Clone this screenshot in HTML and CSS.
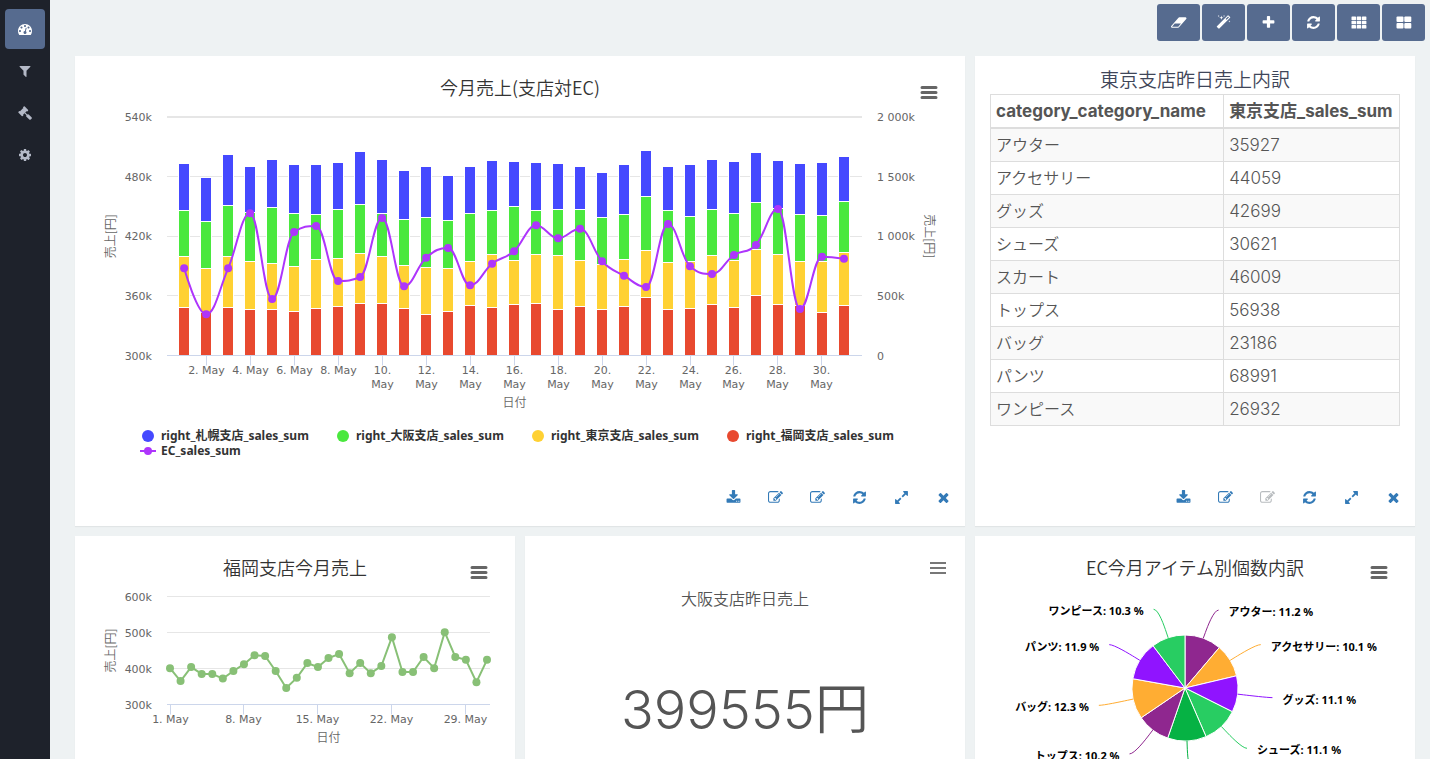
FILE: index.html
```html
<!DOCTYPE html>
<html lang="ja">
  <head>
    <meta charset="UTF-8" />
    <meta name="viewport" content="width=device-width, initial-scale=1.0" />
    <title>売上ダッシュボード</title>
    <link rel="stylesheet" href="styles.css" />
  </head>
  <body>
    <!-- Icon sprite -->
    <svg class="sprite" aria-hidden="true">
      <symbol id="i-dashboard" viewBox="0 0 1792 1792">
        <path d="M384 1152q0-53-37.5-90.5t-90.5-37.5-90.5 37.5-37.5 90.5 37.5 90.5 90.5 37.5 90.5-37.5 37.5-90.5zm192-448q0-53-37.5-90.5t-90.5-37.5-90.5 37.5-37.5 90.5 37.5 90.5 90.5 37.5 90.5-37.5 37.5-90.5zm428 481l101-382q6-26-7.500-48.500t-38.500-29.500-48 6.500-30 39.500l-101 382q-60 5-107 43.500t-63 98.500q-20 77 20 146t117 89 146-20 89-117q16-60-6-117t-72-91zm660-33q0-53-37.500-90.500t-90.500-37.500-90.500 37.500-37.500 90.500 37.500 90.500 90.500 37.500 90.500-37.500 37.500-90.500zm-640-640q0-53-37.500-90.500t-90.500-37.500-90.500 37.500-37.500 90.500 37.500 90.500 90.500 37.500 90.500-37.500 37.500-90.500zm448 192q0-53-37.500-90.500t-90.500-37.500-90.500 37.500-37.500 90.500 37.500 90.500 90.500 37.500 90.500-37.500 37.500-90.500zm320 448q0 261-141 483-19 29-54 29h-1402q-35 0-54-29-141-221-141-483 0-182 71-348t191-286 286-191 348-71 348 71 286 191 191 286 71 348z" />
      </symbol>
      <symbol id="i-filter" viewBox="0 0 1792 1792">
        <path d="M1595 295q17 41-14 70l-493 493v742q0 42-39 59-13 5-25 5-27 0-45-19l-256-256q-19-19-19-45v-486l-493-493q-31-29-14-70 17-39 59-39h1280q42 0 59 39z" />
      </symbol>
      <symbol id="i-gavel" viewBox="0 0 1792 1792">
        <path d="M1771 1536q0 53-37 90l-107 108q-39 37-91 37-53 0-90-37l-363-364q-38-36-38-90 0-53 43-96l-256-256-126 126q-14 14-34 14t-34-14q2 2 12.5 12t12.5 13 10 11.5 10 13.5 6 13.5 5.5 16.5 1.5 18q0 38-28 68-3 3-16.5 18t-19 20.5-18.5 16.5-22 15.5-22 9-26 4.5q-40 0-68-28l-408-408q-28-28-28-68 0-13 4.5-26t9-22 15.5-22 16.5-18.5 20.5-19 18-16.5q30-28 68-28 10 0 18 1.5t16.5 5.5 13.5 6 13.5 10 11.5 10 13 12.5 12 12.5q-14-14-14-34t14-34l348-348q14-14 34-14t34 14q-2-2-12.5-12t-12.5-13-10-11.5-10-13.5-6-13.5-5.5-16.5-1.5-18q0-38 28-68 3-3 16.5-18t19-20.5 18.5-16.5 22-15.5 22-9 26-4.5q40 0 68 28l408 408q28 28 28 68 0 13-4.5 26t-9 22-15.5 22-16.5 18.5-20.5 19-18 16.5q-30 28-68 28-10 0-18-1.5t-16.5-5.5-13.5-6-13.5-10-11.5-10-13-12.5-12-12.5q14 14 14 34t-14 34l-126 126 256 256q43-43 96-43 52 0 91 37l363 363q37 39 37 91z" />
      </symbol>
      <symbol id="i-cog" viewBox="0 0 1792 1792">
        <path d="M1152 896q0-106-75-181t-181-75-181 75-75 181 75 181 181 75 181-75 75-181zm512-109v222q0 12-8 23t-20 13l-185 28q-19 54-39 91 35 50 107 138 10 12 10 25t-9 23q-27 37-99 108t-94 71q-12 0-26-9l-138-108q-44 23-91 38-16 136-29 186-7 28-36 28h-222q-14 0-24.5-8.5t-11.5-21.5l-28-184q-49-16-90-37l-141 107q-10 9-25 9-14 0-25-11-126-114-165-168-7-10-7-23 0-12 8-23 15-21 51-66.5t54-70.5q-27-50-41-99l-183-27q-13-2-21-12.5t-8-23.5v-222q0-12 8-23t19-13l186-28q14-46 39-92-40-57-107-138-10-12-10-24 0-10 9-23 26-36 98.5-107.5t94.5-71.5q13 0 26 10l138 107q44-23 91-38 16-136 29-186 7-28 36-28h222q14 0 24.5 8.5t11.5 21.5l28 184q49 16 90 37l142-107q9-9 24-9 13 0 25 10 129 119 165 170 7 8 7 22 0 12-8 23-15 21-51 66.5t-54 70.5q26 50 41 98l183 28q13 2 21 12.5t8 23.5z" />
      </symbol>
      <symbol id="i-eraser" viewBox="-64 0 1984 1792">
        <path d="M832 1408l336-384h-768l-336 384h768zm1013-1077q15 34 9.5 71.5t-30.500 65.500l-896 1024q-38 44-96 44h-768q-38 0-69.500-20.500t-47.500-54.500q-15-34-9.500-71.500t30.500-65.500l896-1024q38-44 96-44h768q38 0 69.500 20.500t47.500 54.500z" />
      </symbol>
      <symbol id="i-magic" viewBox="0 0 1792 1792">
        <path d="M1254 581l293-293-107-107-293 293zm447-293q0 27-18 45l-1286 1286q-18 18-45 18t-45-18l-198-198q-18-18-18-45t18-45l1286-1286q18-18 45-18t45 18l198 198q18 18 18 45zm-1351-190l98 30-98 30-30 98-30-98-98-30 98-30 30-98zm350 162l196 60-196 60-60 196-60-196-196-60 196-60 60-196zm930 478l98 30-98 30-30 98-30-98-98-30 98-30 30-98zm-640-640l98 30-98 30-30 98-30-98-98-30 98-30 30-98z" />
      </symbol>
      <symbol id="i-plus" viewBox="0 0 1792 1792">
        <path d="M1600 736v192q0 40-28 68t-68 28h-416v416q0 40-28 68t-68 28h-192q-40 0-68-28t-28-68v-416h-416q-40 0-68-28t-28-68v-192q0-40 28-68t68-28h416v-416q0-40 28-68t68-28h192q40 0 68 28t28 68v416h416q40 0 68 28t28 68z" />
      </symbol>
      <symbol id="i-refresh" viewBox="0 0 1792 1792">
        <path d="M1639 1056q0 5-1 7-64 268-268 434.500t-478 166.500q-146 0-282.500-55t-243.500-157l-129 129q-19 19-45 19t-45-19-19-45v-448q0-26 19-45t45-19h448q26 0 45 19t19 45-19 45l-137 137q71 66 161 102t187 36q134 0 250-65t186-179q11-17 53-117 8-23 30-23h192q13 0 22.500 9.500t9.500 22.500zm25-800v448q0 26-19 45t-45 19h-448q-26 0-45-19t-19-45 19-45l138-138q-148-137-349-137-134 0-250 65t-186 179q-11 17-53 117-8 23-30 23h-199q-13 0-22.500-9.500t-9.500-22.500v-7q65-268 270-434.500t480-166.500q146 0 284 55.500t245 156.500l130-129q19-19 45-19t45 19 19 45z" />
      </symbol>
      <symbol id="i-th" viewBox="0 0 16 15">
        <rect x="0.5" y="1.5" width="4.500" height="3.500" rx="0.6" />
        <rect x="5.700" y="1.5" width="4.500" height="3.500" rx="0.6" />
        <rect x="10.900" y="1.5" width="4.500" height="3.500" rx="0.6" />
        <rect x="0.5" y="5.800" width="4.500" height="3.500" rx="0.6" />
        <rect x="5.700" y="5.800" width="4.500" height="3.500" rx="0.6" />
        <rect x="10.900" y="5.800" width="4.500" height="3.500" rx="0.6" />
        <rect x="0.5" y="10.100" width="4.500" height="3.500" rx="0.6" />
        <rect x="5.700" y="10.100" width="4.500" height="3.500" rx="0.6" />
        <rect x="10.900" y="10.100" width="4.500" height="3.500" rx="0.6" />
      </symbol>
      <symbol id="i-th-large" viewBox="0 0 16 15">
        <rect x="0.5" y="1.5" width="7" height="5.600" rx="1" />
        <rect x="8.300" y="1.5" width="7" height="5.600" rx="1" />
        <rect x="0.5" y="8" width="7" height="5.600" rx="1" />
        <rect x="8.300" y="8" width="7" height="5.600" rx="1" />
      </symbol>
      <symbol id="i-download" viewBox="0 0 1792 1792">
        <path d="M1344 1344q0-26-19-45t-45-19-45 19-19 45 19 45 45 19 45-19 19-45zm256 0q0-26-19-45t-45-19-45 19-19 45 19 45 45 19 45-19 19-45zm128-224v320q0 40-28 68t-68 28h-1472q-40 0-68-28t-28-68v-320q0-40 28-68t68-28h465l135 136q58 56 136 56t136-56l136-136h464q40 0 68 28t28 68zm-325-569q17 41-14 70l-448 448q-18 19-45 19t-45-19l-448-448q-31-29-14-70 17-39 59-39h256v-448q0-26 19-45t45-19h256q26 0 45 19t19 45v448h256q42 0 59 39z" />
      </symbol>
      <symbol id="i-edit" viewBox="0 0 1792 1792">
        <path d="M888 1184l116-116-152-152-116 116v56h96v96h56zm440-720q-16-16-33 1l-350 350q-17 17-1 33t33-1l350-350q17-17 1-33zm80 594v190q0 119-84.500 203.500t-203.500 84.500h-832q-119 0-203.500-84.500t-84.500-203.500v-832q0-119 84.500-203.500t203.500-84.500h832q63 0 117 25 15 7 18 23 3 17-9 29l-49 49q-14 14-32 8-23-6-45-6h-832q-66 0-113 47t-47 113v832q0 66 47 113t113 47h832q66 0 113-47t47-113v-126q0-13 9-22l64-64q15-15 35-7t20 29zm-96-738l288 288-672 672h-288v-288zm444 132l-92 92-288-288 92-92q28-28 68-28t68 28l152 152q28 28 28 68t-28 68z" />
      </symbol>
      <symbol id="i-expand" viewBox="0 0 1792 1792">
        <path d="M883 1056q0 13-10 23l-332 332 144 144q19 19 19 45t-19 45-45 19h-448q-26 0-45-19t-19-45v-448q0-26 19-45t45-19 45 19l144 144 332-332q10-10 23-10t23 10l114 114q10 10 10 23zm781-864v448q0 26-19 45t-45 19-45-19l-144-144-332 332q-10 10-23 10t-23-10l-114-114q-10-10-10-23t10-23l332-332-144-144q-19-19-19-45t19-45 45-19h448q26 0 45 19t19 45z" />
      </symbol>
      <symbol id="i-times" viewBox="0 0 1792 1792">
        <path d="M1490 1322q0 40-28 68l-136 136q-28 28-68 28t-68-28l-294-294-294 294q-28 28-68 28t-68-28l-136-136q-28-28-28-68t28-68l294-294-294-294q-28-28-28-68t28-68l136-136q28-28 68-28t68 28l294 294 294-294q28-28 68-28t68 28l136 136q28 28 28 68t-28 68l-294 294 294 294q28 28 28 68z" />
      </symbol>
      <symbol id="i-menu" viewBox="0 0 18 14">
        <path d="M2 1.500h14M2 6.500h14M2 11.500h14" fill="none" stroke="#666" stroke-width="3" stroke-linecap="round" />
      </symbol>
      <symbol id="i-menu-thin" viewBox="0 0 18 14">
        <path d="M1 1h16v2H1zM1 6h16v2H1zM1 11h16v2H1z" fill="#777" />
      </symbol>
    </svg>

    <div class="layout">
      <nav class="sidebar">
        <a class="sidebar-link active" href="#dashboard" aria-label="ダッシュボード"><svg class="icon"><use href="#i-dashboard" /></svg></a>
        <a class="sidebar-link" href="#filter" aria-label="フィルター"><svg class="icon"><use href="#i-filter" /></svg></a>
        <a class="sidebar-link" href="#tools" aria-label="ツール"><svg class="icon"><use href="#i-gavel" /></svg></a>
        <a class="sidebar-link" href="#settings" aria-label="設定"><svg class="icon"><use href="#i-cog" /></svg></a>
      </nav>

      <main class="main">
        <div class="toolbar">
          <button class="tool" aria-label="消去"><svg class="icon icon-wide"><use href="#i-eraser" /></svg></button>
          <button class="tool" aria-label="自動整列"><svg class="icon"><use href="#i-magic" /></svg></button>
          <button class="tool" aria-label="追加"><svg class="icon"><use href="#i-plus" /></svg></button>
          <button class="tool" aria-label="更新"><svg class="icon"><use href="#i-refresh" /></svg></button>
          <button class="tool" aria-label="3列表示"><svg class="icon icon-wide"><use href="#i-th" /></svg></button>
          <button class="tool" aria-label="2列表示"><svg class="icon icon-wide"><use href="#i-th-large" /></svg></button>
        </div>

        <div class="board">
          <section class="card wide tall">
            <div class="card-body">
              <svg class="chart chart-tall" id="salesChart"></svg>
              <button class="menu" aria-label="グラフメニュー"><svg class="menu-icon"><use href="#i-menu" /></svg></button>
              <ul class="legend">
                <li><svg class="key" viewBox="0 0 16 12"><circle class="s-sapporo" cx="8" cy="6" r="6" /></svg>right_札幌支店_sales_sum</li>
                <li><svg class="key" viewBox="0 0 16 12"><circle class="s-osaka" cx="8" cy="6" r="6" /></svg>right_大阪支店_sales_sum</li>
                <li><svg class="key" viewBox="0 0 16 12"><circle class="s-tokyo" cx="8" cy="6" r="6" /></svg>right_東京支店_sales_sum</li>
                <li><svg class="key" viewBox="0 0 16 12"><circle class="s-fukuoka" cx="8" cy="6" r="6" /></svg>right_福岡支店_sales_sum</li>
                <li><svg class="key" viewBox="0 0 16 12"><path class="ec-line" d="M0 6h16" /><circle class="ec-dot" cx="8" cy="6" r="4" /></svg>EC_sales_sum</li>
              </ul>
            </div>
            <div class="card-footer">
              <button class="action" aria-label="ダウンロード"><svg class="icon"><use href="#i-download" /></svg></button>
              <button class="action" aria-label="編集"><svg class="icon"><use href="#i-edit" /></svg></button>
              <button class="action" aria-label="グラフ編集"><svg class="icon"><use href="#i-edit" /></svg></button>
              <button class="action" aria-label="更新"><svg class="icon"><use href="#i-refresh" /></svg></button>
              <button class="action" aria-label="拡大"><svg class="icon"><use href="#i-expand" /></svg></button>
              <button class="action" aria-label="閉じる"><svg class="icon"><use href="#i-times" /></svg></button>
            </div>
          </section>

          <section class="card tall">
            <div class="card-body">
              <h2 class="table-title">東京支店昨日売上内訳</h2>
              <table class="table">
                <thead>
                  <tr><th>category_category_name</th><th>東京支店_sales_sum</th></tr>
                </thead>
                <tbody>
                  <tr><td>アウター</td><td class="num">35927</td></tr>
                  <tr><td>アクセサリー</td><td class="num">44059</td></tr>
                  <tr><td>グッズ</td><td class="num">42699</td></tr>
                  <tr><td>シューズ</td><td class="num">30621</td></tr>
                  <tr><td>スカート</td><td class="num">46009</td></tr>
                  <tr><td>トップス</td><td class="num">56938</td></tr>
                  <tr><td>バッグ</td><td class="num">23186</td></tr>
                  <tr><td>パンツ</td><td class="num">68991</td></tr>
                  <tr><td>ワンピース</td><td class="num">26932</td></tr>
                </tbody>
              </table>
            </div>
            <div class="card-footer">
              <button class="action" aria-label="ダウンロード"><svg class="icon"><use href="#i-download" /></svg></button>
              <button class="action" aria-label="編集"><svg class="icon"><use href="#i-edit" /></svg></button>
              <button class="action" aria-label="グラフ編集" disabled><svg class="icon"><use href="#i-edit" /></svg></button>
              <button class="action" aria-label="更新"><svg class="icon"><use href="#i-refresh" /></svg></button>
              <button class="action" aria-label="拡大"><svg class="icon"><use href="#i-expand" /></svg></button>
              <button class="action" aria-label="閉じる"><svg class="icon"><use href="#i-times" /></svg></button>
            </div>
          </section>

          <section class="card">
            <div class="card-body">
              <svg class="chart" id="fukuokaChart"></svg>
              <button class="menu" aria-label="グラフメニュー"><svg class="menu-icon"><use href="#i-menu" /></svg></button>
            </div>
          </section>

          <section class="card">
            <div class="card-body metric">
              <h2 class="metric-title">大阪支店昨日売上</h2>
              <p class="metric-value">399555円</p>
              <button class="menu menu-corner" aria-label="メニュー"><svg class="menu-icon"><use href="#i-menu-thin" /></svg></button>
            </div>
          </section>

          <section class="card">
            <div class="card-body">
              <svg class="chart" id="itemChart"></svg>
              <button class="menu" aria-label="グラフメニュー"><svg class="menu-icon"><use href="#i-menu" /></svg></button>
            </div>
          </section>
        </div>
      </main>
    </div>

    <script src="charts.js"></script>
  </body>
</html>
```
FILE: styles.css
```css
:root {
  --navy: #1e222b;
  --slate: #566b8f;
  --background: #eef2f3;
  --link: #337ab7;
  --border: #dddddd;
  --jp: "Noto Sans CJK JP", sans-serif;
}
* {
  margin: 0;
  padding: 0;
  box-sizing: border-box;
}
body {
  font-family: "Inter", var(--jp);
  font-size: 16px;
  color: #555555;
  background: var(--background);
}
button {
  border: none;
  background: none;
  cursor: pointer;
}
.sprite {
  display: none;
}
.icon {
  display: block;
  width: 15px;
  height: 15px;
  fill: currentColor;
}
.icon-wide {
  width: 16px;
}

.layout {
  display: flex;
  height: 100vh;
}
.sidebar {
  display: flex;
  flex: none;
  flex-direction: column;
  gap: 2px;
  width: 50px;
  padding: 9px 5px;
  background: var(--navy);
}
.sidebar-link {
  display: flex;
  align-items: center;
  justify-content: center;
  height: 40px;
  border-radius: 4px;
  color: #b4b9c7;
}
.sidebar-link .icon {
  width: 14px;
  height: 14px;
}
.sidebar-link.active {
  background: var(--slate);
  color: #ffffff;
}
.main {
  flex: 1;
  min-width: 0;
  overflow-y: auto;
  scrollbar-width: none;
}

.toolbar {
  display: flex;
  justify-content: flex-end;
  gap: 2px;
  padding: 4px 5px 15px;
}
.tool {
  display: flex;
  align-items: center;
  justify-content: center;
  width: 43px;
  height: 37px;
  border-radius: 3px;
  background: var(--slate);
  color: #ffffff;
}
.tool:hover {
  background: #475a7b;
}

.board {
  display: grid;
  grid-template-columns: repeat(3, minmax(0, 1fr));
  gap: 10px;
  padding: 0 15px 10px 25px;
}
.card {
  display: flex;
  flex-direction: column;
  min-height: 300px;
  padding: 15px 15px 0;
  background: #ffffff;
  box-shadow: 0 1px 1px rgba(0, 0, 0, 0.05);
}
.card.wide {
  grid-column: span 2;
}
.card.tall {
  min-height: 470px;
}
.card-body {
  position: relative;
  flex: 1;
}
.card-footer {
  display: flex;
  justify-content: flex-end;
  gap: 2px;
  margin-right: -13px;
  padding-bottom: 12px;
}
.action {
  display: flex;
  align-items: center;
  justify-content: center;
  width: 40px;
  height: 34px;
  color: var(--link);
}
.action:disabled {
  color: #b8bcbf;
  cursor: default;
}
.menu {
  position: absolute;
  top: 10px;
  right: 9px;
  display: flex;
  align-items: center;
  justify-content: center;
  width: 24px;
  height: 24px;
}
.menu-corner {
  top: 5px;
  right: 0;
}
.menu-icon {
  width: 18px;
  height: 14px;
}

/* Charts */
.chart {
  display: block;
  width: 100%;
  height: 230px;
  font-family: "DejaVu Sans", var(--jp);
  font-size: 11px;
  fill: #666666;
}
.chart-tall {
  height: 357px;
}
.chart-title {
  font-family: var(--jp);
  font-size: 18px;
  font-weight: 350;
  fill: #333333;
}
.axis-title {
  font-family: var(--jp);
  font-size: 12px;
  font-weight: 350;
}
.grid {
  stroke: #e6e6e6;
}
.grid-top {
  stroke-width: 2;
}
.axis {
  stroke: #ccd6eb;
}
.bar {
  stroke: #ffffff;
}
.s-sapporo {
  fill: #4549ff;
}
.s-osaka {
  fill: #4ae83e;
}
.s-tokyo {
  fill: #ffd133;
}
.s-fukuoka {
  fill: #e8492f;
}
.ec-line,
.trend-line {
  fill: none;
  stroke-width: 2;
}
.ec-line {
  stroke: #ae35fc;
}
.ec-dot {
  fill: #ae35fc;
}
.trend-line {
  stroke: #88c076;
}
.trend-dot {
  fill: #88c076;
}
.slice {
  stroke: #ffffff;
  stroke-linejoin: round;
}
.connector {
  fill: none;
}
.slice-label {
  font-family: "Noto Sans", var(--jp);
  font-weight: bold;
  fill: #000000;
}
.legend {
  display: grid;
  grid-template-columns: repeat(auto-fit, 195px);
  justify-content: center;
  list-style: none;
  font: bold 12px/15px "Noto Sans", var(--jp);
  color: #333333;
}
.legend li {
  display: flex;
  align-items: center;
  gap: 5px;
  height: 15px;
  padding-left: 10px;
  white-space: nowrap;
}
.key {
  width: 16px;
  height: 12px;
}

/* Table card */
.table-title {
  padding-bottom: 8px;
  font-family: var(--jp);
  font-size: 19px;
  font-weight: 350;
  line-height: 15px;
  text-align: center;
  color: #3f4659;
}
.table {
  width: 100%;
  border-collapse: collapse;
  line-height: 22px;
}
.table th,
.table td {
  padding: 5px;
  border: 1px solid var(--border);
  text-align: left;
}
.table td {
  font-weight: 350;
}
.table th {
  border-bottom-width: 2px;
  font-size: 17px;
  font-weight: 700;
}
.table th:first-child {
  width: 57%;
}
.table .num {
  font-size: 17px;
}
.table tbody tr:nth-child(odd) {
  background: #f9f9f9;
}

/* Single value card */
.metric {
  text-align: center;
}
.metric-title {
  padding-top: 35px;
  font-family: var(--jp);
  font-size: 16px;
  font-weight: 350;
  line-height: 24px;
}
.metric-value {
  padding-top: 64px;
  font-size: 54px;
  font-weight: 350;
  line-height: 72px;
}
```
FILE: charts.js
```js
// Running totals per day in thousands: [福岡, +東京, +大阪, +札幌]
const branchSales = [
  [348, 400, 446, 493], [343, 388, 435, 479], [348, 400, 451, 502],
  [346, 395, 444, 490], [346, 393, 449, 497], [344, 390, 443, 492],
  [347, 397, 442, 492], [349, 398, 447, 494], [352, 403, 452, 505],
  [352, 400, 443, 497], [347, 391, 437, 486], [341, 389, 439, 490],
  [344, 388, 436, 481], [350, 395, 443, 490], [348, 402, 446, 496],
  [351, 396, 450, 495], [352, 402, 446, 494], [346, 401, 447, 493],
  [349, 396, 447, 490], [346, 392, 439, 484], [349, 397, 442, 492],
  [358, 406, 460, 506], [346, 394, 446, 490], [347, 395, 440, 492],
  [351, 401, 447, 497], [348, 396, 443, 495], [360, 407, 454, 504],
  [351, 402, 448, 496], [350, 395, 442, 493], [343, 395, 441, 494],
  [350, 404, 455, 500],
];
const ecSales = [
  731, 345, 731, 1192, 474, 1036, 1086, 625, 658, 1153, 580, 820, 901, 589,
  770, 874, 1092, 983, 1063, 790, 669, 574, 1103, 748, 683, 843, 927, 1229,
  390, 829, 812,
];
const fukuokaSales = [
  401, 365, 404, 385, 385, 372, 393, 412, 437, 435, 393, 346, 374, 415, 404,
  429, 440, 387, 415, 387, 407, 487, 390, 390, 432, 401, 501, 432, 424, 362,
  424,
];
const items = [
  ["アウター", 11.2, "#8f278f"],
  ["アクセサリー", 10.1, "#ffad33"],
  ["グッズ", 11.1, "#9014ff"],
  ["シューズ", 11.1, "#28cd62"],
  ["スカート", 11.8, "#06b244"],
  ["トップス", 10.2, "#8f278f"],
  ["バッグ", 12.3, "#ffad33"],
  ["パンツ", 11.9, "#9014ff"],
  ["ワンピース", 10.3, "#28cd62"],
];

function add(parent, tag, attrs, text) {
  const el = document.createElementNS("http://www.w3.org/2000/svg", tag);
  for (const key in attrs) el.setAttribute(key, attrs[key]);
  if (text !== undefined) el.textContent = text;
  parent.appendChild(el);
  return el;
}

function label(svg, x, y, text, anchor, cls) {
  return add(svg, "text", { x, y, "text-anchor": anchor || "middle", class: cls || "" }, text);
}

function line(svg, x1, y1, x2, y2, cls) {
  add(svg, "line", { x1, y1, x2, y2, class: cls });
}

// Keep 1px lines on the pixel grid
function crisp(v) {
  return Math.floor(v) + 0.5;
}

function reset(id, title) {
  const svg = document.getElementById(id);
  svg.innerHTML = "";
  label(svg, svg.clientWidth / 2, 24, title, "middle", "chart-title");
  return svg;
}

function sideTitle(svg, x, y, text, angle) {
  label(svg, x, y, text, "middle", "axis-title").setAttribute(
    "transform",
    `rotate(${angle} ${x} ${y})`
  );
}

// Smooth curve through the points that never overshoots a local extreme
function spline(pts) {
  let d = `M${pts[0][0]} ${pts[0][1]}`;
  let out = pts[0];
  for (let i = 1; i < pts.length; i++) {
    const [x, y] = pts[i];
    const last = pts[i - 1];
    const next = pts[i + 1];
    let inX = x;
    let inY = y;
    let nextOut = [x, y];
    if (next) {
      inX = (1.5 * x + last[0]) / 2.5;
      inY = (1.5 * y + last[1]) / 2.5;
      const outX = (1.5 * x + next[0]) / 2.5;
      let outY = (1.5 * y + next[1]) / 2.5;
      const shift = ((outY - inY) * (outX - x)) / (outX - inX) + y - outY;
      inY += shift;
      outY += shift;
      if (inY > last[1] && inY > y) {
        inY = Math.max(last[1], y);
        outY = 2 * y - inY;
      } else if (inY < last[1] && inY < y) {
        inY = Math.min(last[1], y);
        outY = 2 * y - inY;
      }
      if (outY > next[1] && outY > y) {
        outY = Math.max(next[1], y);
        inY = 2 * y - outY;
      } else if (outY < next[1] && outY < y) {
        outY = Math.min(next[1], y);
        inY = 2 * y - outY;
      }
      nextOut = [outX, outY];
    }
    d += `C${out[0]} ${out[1]} ${inX} ${inY} ${x} ${y}`;
    out = nextOut;
  }
  return d;
}

function drawSales() {
  const svg = reset("salesChart", "今月売上(支店対EC)");
  const left = 77;
  const right = svg.clientWidth - 88;
  const top = 46;
  const bottom = 284.5;
  const height = bottom - top;
  const step = (right - left) / 31.6;
  const first = left + step * 0.78;
  const barY = (v) => bottom - ((v - 300) / 240) * height;
  const ecY = (v) => bottom - (v / 2000) * height;

  const rightLabels = ["0", "500k", "1 000k", "1 500k", "2 000k"];
  for (let i = 0; i <= 4; i++) {
    const y = bottom - (height * i) / 4;
    if (i === 4) line(svg, left, y, right, y, "grid grid-top");
    else if (i > 0) line(svg, left, crisp(y), right, crisp(y), "grid");
    label(svg, left - 15, Math.round(y) + 4, 300 + i * 60 + "k", "end");
    label(svg, right + 15, Math.round(y) + 4, rightLabels[i], "start");
  }

  const classes = ["s-fukuoka", "s-tokyo", "s-osaka", "s-sapporo"];
  branchSales.forEach((levels, i) => {
    const x = Math.round(first + step * i) - 5.5;
    let base = bottom;
    levels.forEach((level, k) => {
      const y = crisp(barY(level));
      add(svg, "rect", { x, y, width: 11, height: base - y, class: "bar " + classes[k] });
      base = y;
    });
  });

  line(svg, left, bottom, right, bottom, "axis");
  for (let day = 2; day <= 30; day += 2) {
    const x = crisp(first + step * (day - 1));
    line(svg, x, bottom, x, bottom + 10, "axis");
    if (day < 10) {
      label(svg, x, 303, day + ". May");
    } else {
      label(svg, x, 303, day + ".");
      label(svg, x, 317, "May");
    }
  }

  const pts = ecSales.map((v, i) => [first + step * i, ecY(v)]);
  add(svg, "path", { d: spline(pts), class: "ec-line" });
  pts.forEach(([cx, cy]) => add(svg, "circle", { cx, cy, r: 4, class: "ec-dot" }));

  label(svg, (left + right) / 2, 336, "日付", "middle", "axis-title");
  sideTitle(svg, 25, top + height / 2, "売上[円]", -90);
  sideTitle(svg, right + 63, top + height / 2, "売上[円]", 90);
}

function drawFukuoka() {
  const svg = reset("fukuokaChart", "福岡支店今月売上");
  const left = 77;
  const right = svg.clientWidth - 10;
  const top = 45.5;
  const bottom = 153.5;
  const height = bottom - top;
  const step = (right - left - 6) / 30;
  const first = left + 3;

  for (let i = 0; i <= 3; i++) {
    const y = bottom - (height * i) / 3;
    line(svg, left, y, right, y, i ? "grid" : "axis");
    label(svg, left - 15, Math.round(y) + 4, 300 + i * 100 + "k", "end");
  }
  for (let day = 1; day <= 29; day += 7) {
    const x = crisp(first + step * (day - 1));
    line(svg, x, bottom, x, bottom + 10, "axis");
    label(svg, x, 172, day + ". May");
  }

  const pts = fukuokaSales.map((v, i) => [
    first + step * i,
    bottom - ((v - 300) / 300) * height,
  ]);
  add(svg, "path", { d: "M" + pts.join("L"), class: "trend-line" });
  pts.forEach(([cx, cy]) => add(svg, "circle", { cx, cy, r: 4, class: "trend-dot" }));

  label(svg, (left + right) / 2, 191, "日付", "middle", "axis-title");
  sideTitle(svg, 25, top + height / 2, "売上[円]", -90);
}

function drawItems() {
  const svg = reset("itemChart", "EC今月アイテム別個数内訳");
  const cx = svg.clientWidth / 2 - 10;
  const cy = 137;
  const r = 53;
  const at = (share, radius) => {
    const a = (share / 100) * Math.PI * 2;
    return [cx + Math.sin(a) * radius, cy - Math.cos(a) * radius];
  };

  let start = 0;
  items.forEach(([name, share, color]) => {
    const mid = start + share / 2;
    const p1 = at(start, r);
    const p2 = at(start + share, r);
    add(svg, "path", {
      d: `M${cx} ${cy}L${p1}A${r} ${r} 0 0 1 ${p2}Z`,
      fill: color,
      class: "slice",
    });

    const side = mid < 50 ? 1 : -1;
    const edge = at(mid, r);
    const bend = at(mid, r + 6);
    const [ex, ey] = at(mid, r + 30);
    add(svg, "path", {
      d: `M${ex + side * 5} ${ey}C${ex} ${ey} ${2 * bend[0] - edge[0]} ${2 * bend[1] - edge[1]} ${bend}L${edge}`,
      stroke: color,
      class: "connector",
    });
    label(svg, ex + side * 15, ey + 6, `${name}: ${share.toFixed(1)} %`, side > 0 ? "start" : "end", "slice-label");
    start += share;
  });
}

function drawAll() {
  drawSales();
  drawFukuoka();
  drawItems();
}

drawAll();
window.addEventListener("resize", drawAll);
```
